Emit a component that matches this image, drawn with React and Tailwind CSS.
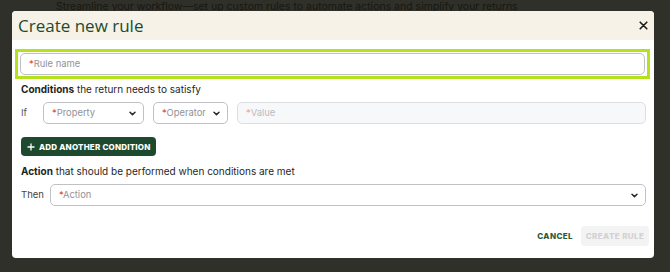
import React from "react";

function Chevron() {
  return (
    <svg width="7" height="5" viewBox="0 0 7 5" className="shrink-0">
      <path d="M1 1.2 L3.5 3.6 L6 1.2" fill="none" stroke="#2a2a2a" strokeWidth="1.5" strokeLinecap="round" strokeLinejoin="round" />
    </svg>
  );
}

function Placeholder({ children, faded }) {
  return (
    <span className={faded ? "text-[#b9bcc2]" : "text-[#8f9297]"}>
      <span className={faded ? "text-[#f2a08f]" : "text-[#e0452b]"}>*</span>
      {children}
    </span>
  );
}

function Select({ label, className }) {
  return (
    <div className={"flex h-[22px] items-center justify-between rounded-[5px] border border-[#bfc1c5] bg-white pl-[8px] pr-[7px] text-[9.4px] " + className}>
      <Placeholder>{label}</Placeholder>
      <Chevron />
    </div>
  );
}

export default function App() {
  return (
    <div className="relative h-[272px] w-[670px] overflow-hidden bg-[#30302a] font-['Inter',sans-serif]">
      <p className="whitespace-nowrap pl-[56px] text-[10.5px] leading-[13px] text-[#17170f]">
        Streamline your workflow—set up custom rules to automate actions and simplify your returns
      </p>

      <div className="absolute left-[12px] top-[11px] flex h-[247px] w-[642px] flex-col overflow-hidden rounded-[4px] bg-white">
        <div className="flex h-[29px] shrink-0 items-center justify-between bg-[#f6f2e7] pl-[6px] pr-[5px]">
          <h2 className="font-['Open_Sans',sans-serif] text-[17px] font-medium leading-none text-[#1d4b2f]">
            Create new rule
          </h2>
          <svg width="9" height="9" viewBox="0 0 9 9" className="mr-[1px]">
            <path d="M1.2 1.2 L7.8 7.8 M7.8 1.2 L1.2 7.8" stroke="#1b1b1b" strokeWidth="1.6" strokeLinecap="round" />
          </svg>
        </div>

        <div className="flex flex-1 flex-col pl-[9px] pr-[8px]">
          <div className="-ml-[6px] -mr-[4px] mt-[9px] border-[3px] border-[#b4e21d] px-[2px] py-[1px]">
            <div className="flex h-[22px] items-center rounded-[5px] border border-[#bfc1c5] bg-white pl-[8px] text-[9.4px]">
              <Placeholder>Rule name</Placeholder>
            </div>
          </div>

          <p className="mt-[2px] text-[10px] leading-[16px] text-[#1f1f1f]">
            <span className="font-bold">Conditions</span> the return needs to satisfy
          </p>

          <div className="mt-[5px] flex items-center">
            <span className="w-[22px] text-[9.5px] text-[#555]">If</span>
            <Select label="Property" className="w-[101px]" />
            <Select label="Operator" className="ml-[9px] w-[75px]" />
            <div className="ml-[9px] flex h-[22px] flex-1 items-center rounded-[5px] border border-[#dcdee1] bg-[#f7f8fa] pl-[8px] text-[9.4px]">
              <Placeholder faded>Value</Placeholder>
            </div>
          </div>

          <div className="mt-[13px] flex">
            <button className="flex h-[19px] w-[135px] items-center gap-[4px] whitespace-nowrap rounded-[4px] bg-[#1d4a2f] pl-[6px] text-[8px] font-extrabold tracking-[0.2px] text-white">
              <svg width="8" height="8" viewBox="0 0 8 8">
                <path d="M4 0.5 V7.5 M0.5 4 H7.5" stroke="white" strokeWidth="1.3" />
              </svg>
              ADD ANOTHER CONDITION
            </button>
          </div>

          <p className="mt-[7px] text-[10px] leading-[16px] text-[#1f1f1f]">
            <span className="font-bold">Action</span> that should be performed when conditions are met
          </p>

          <div className="mt-[5px] flex items-center">
            <span className="w-[29px] text-[9.5px] text-[#444]">Then</span>
            <Select label="Action" className="flex-1" />
          </div>

          <div className="-mr-[3px] mt-[20px] flex items-center justify-end gap-[8px]">
            <button className="whitespace-nowrap text-[8px] font-extrabold tracking-[0.4px] text-[#2c5a3b]">CANCEL</button>
            <button className="h-[20px] w-[68px] whitespace-nowrap rounded-[4px] bg-[#f3f3f3] text-[8px] font-extrabold tracking-[0.4px] text-[#d2d2d2]">
              CREATE RULE
            </button>
          </div>
        </div>
      </div>
    </div>
  );
}
